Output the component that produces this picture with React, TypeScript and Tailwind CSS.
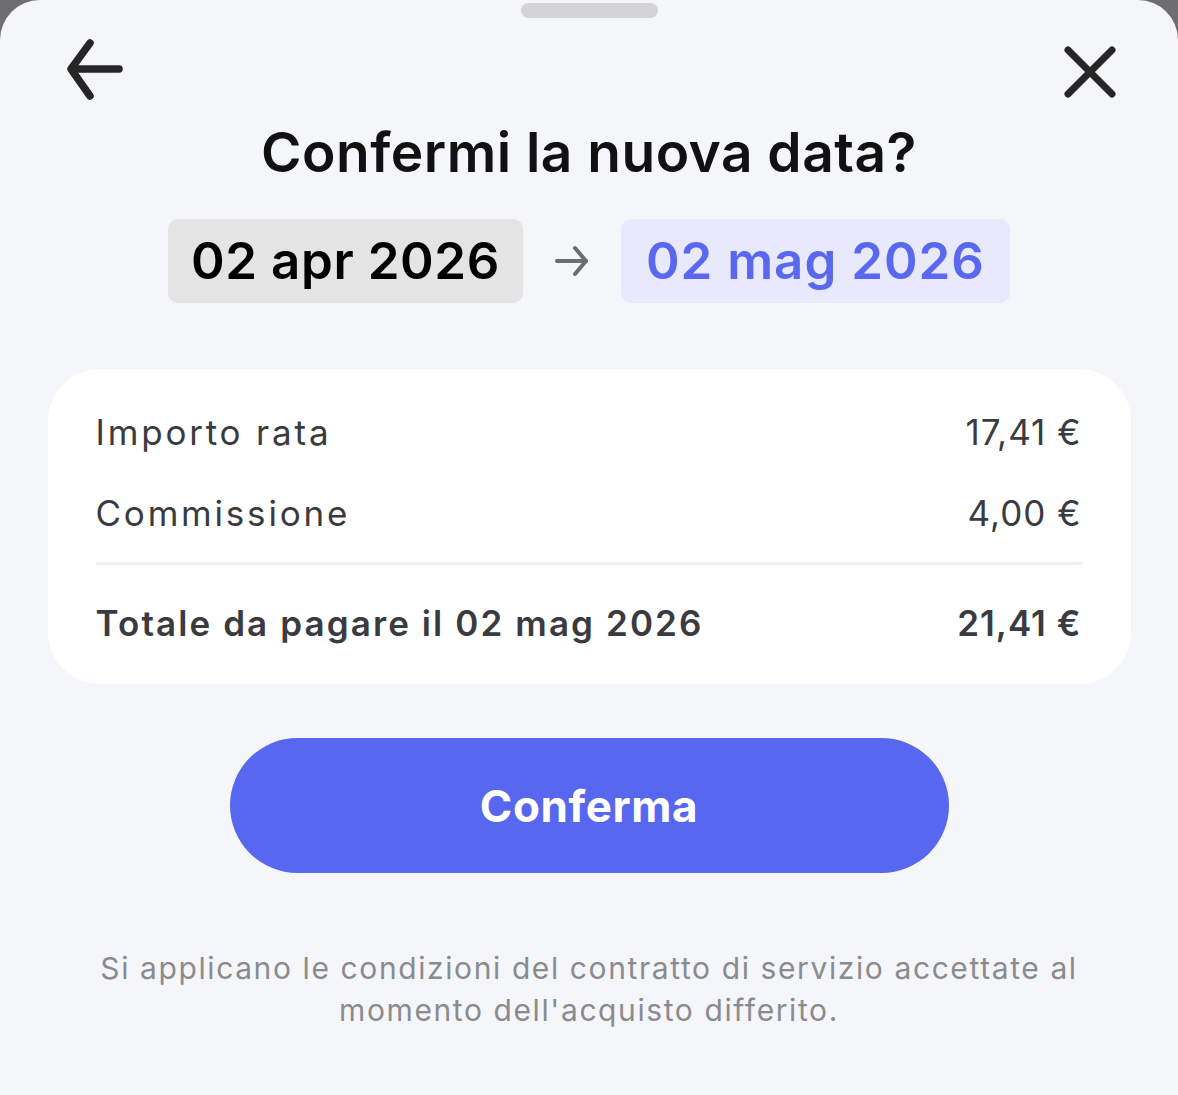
import React from 'react';

const rows = [
    { label: "Importo rata", value: "17,41 €" },
    { label: "Commissione", value: "4,00 €" },
];

const BackIcon = () => (
    <svg width="60" height="64" viewBox="0 0 60 64" fill="none" stroke="#262626" strokeWidth="7.5" strokeLinecap="round" strokeLinejoin="round">
        <path d="M8 32 H55" />
        <path d="M26 6 L7 32 L26 59" />
    </svg>
);

const CloseIcon = () => (
    <svg width="60" height="60" viewBox="0 0 60 60" fill="none" stroke="#262626" strokeWidth="7" strokeLinecap="round">
        <path d="M8 8 L52 52" />
        <path d="M52 8 L8 52" />
    </svg>
);

export default function App() {
    return (
        <div className="w-full h-[1095px] bg-[#6e6e70] overflow-hidden" style={{ fontFamily: 'Inter, "Noto Sans", sans-serif' }}>
            <div className="h-full bg-[#f5f6fa] rounded-t-[40px] flex flex-col items-center">
                {/* drag handle */}
                <div className="mt-[3px] h-[15px] w-[137px] rounded-full bg-[#d4d4d7]" />

                {/* header */}
                <div className="w-full flex justify-between pl-[64px] pr-[58px] mt-[19px]">
                    <BackIcon />
                    <div className="pt-[5px]">
                        <CloseIcon />
                    </div>
                </div>

                <h1 className="mt-[18px] text-[55px] leading-[64px] font-semibold text-[#111] tracking-[0.5px]">
                    Confermi la nuova data?
                </h1>

                <div className="mt-[35px] flex items-center gap-[31px]">
                    <div className="h-[84px] px-[23px] rounded-[10px] bg-[#e4e4e5] flex items-center text-[51px] font-semibold text-black tracking-[0.6px]">
                        02 apr 2026
                    </div>
                    <svg width="36" height="36" viewBox="0 0 36 36" fill="none" stroke="#6b6c70" strokeWidth="4" strokeLinecap="round" strokeLinejoin="round">
                        <path d="M3 18 H32" />
                        <path d="M21 5 L32 18 L21 31" />
                    </svg>
                    <div className="h-[84px] px-[25px] rounded-[10px] bg-[#e8e9fd] flex items-center text-[51px] font-semibold text-[#5a68f0] tracking-[1px]">
                        02 mag 2026
                    </div>
                </div>

                {/* summary card */}
                <div className="mt-[66px] w-[1083px] bg-white rounded-[52px] pl-[48px] pr-[49px] pt-[38px] pb-[36px] text-[#3a3b40]">
                    {rows.map((row, index) => (
                        <div key={index} className="flex justify-between items-center h-[50px] mb-[31px] text-[35px]">
                            <span className="tracking-[2.8px]">{row.label}</span>
                            <span className="tracking-[1px]">{row.value}</span>
                        </div>
                    ))}
                    <div className="h-[3px] bg-[#eff0f3] -mt-[7px]" />
                    <div className="flex justify-between items-center h-[50px] mt-[33px] text-[35px] font-semibold">
                        <span className="tracking-[2.1px]">Totale da pagare il 02 mag 2026</span>
                        <span className="tracking-[1px]">21,41 €</span>
                    </div>
                </div>

                <button className="mt-[54px] w-[719px] h-[135px] rounded-full bg-[#5767f0] text-white text-[44px] font-bold tracking-[0.6px]">
                    Conferma
                </button>

                <p className="mt-[74px] w-[1000px] text-center text-[30px] leading-[42px] text-[#8b8b8f] tracking-[1.6px]">
                    Si applicano le condizioni del contratto di servizio accettate al momento dell'acquisto differito.
                </p>
            </div>
        </div>
    );
}
